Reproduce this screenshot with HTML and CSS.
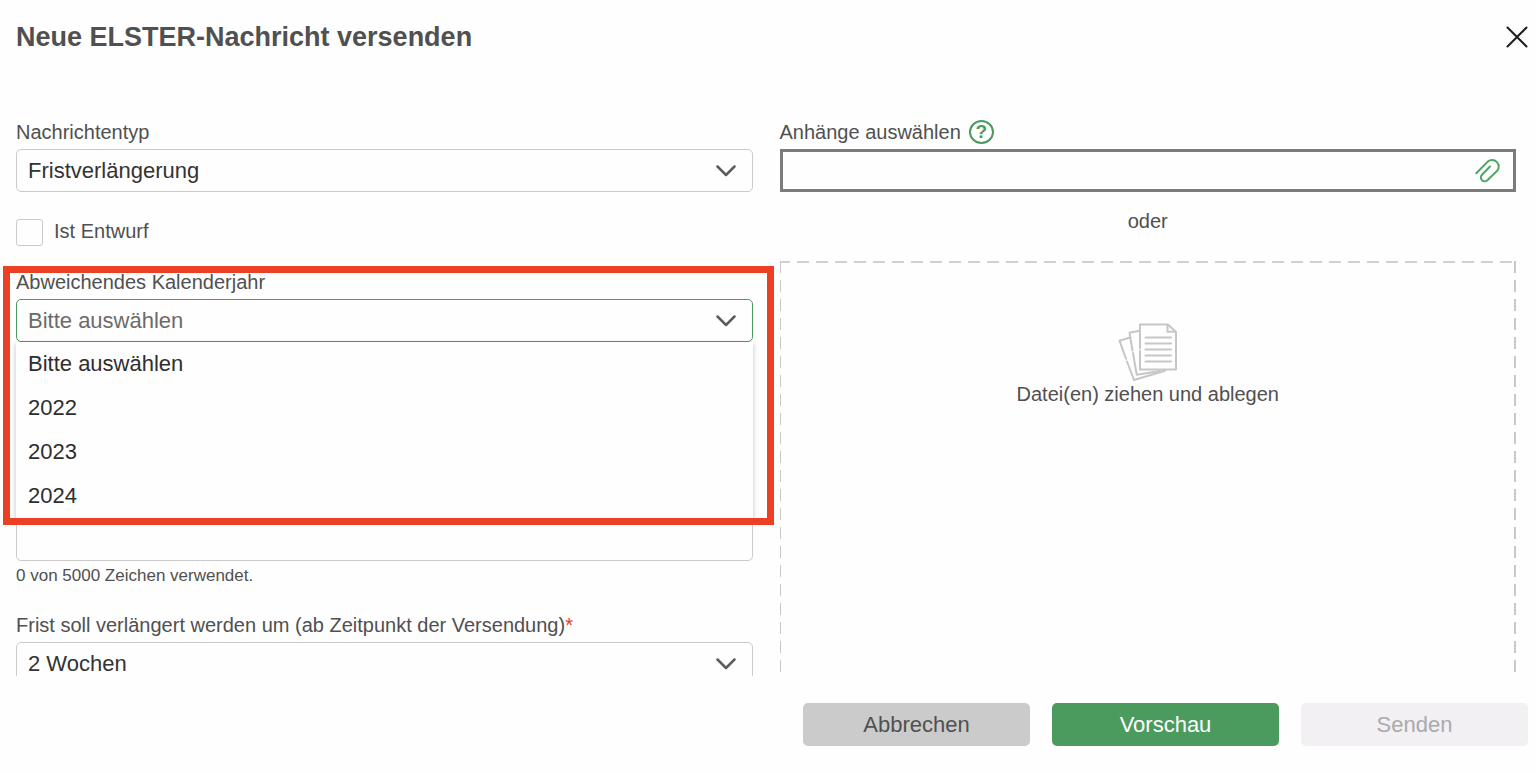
FILE: index.html
```
<!DOCTYPE html>
<html lang="de">
<head>
    <meta charset="UTF-8">
    <meta name="viewport" content="width=device-width, initial-scale=1.0">
    <title>Neue ELSTER-Nachricht versenden</title>
    <link rel="stylesheet" href="styles.css">
</head>
<body>

    <form class="dialog">
        <header class="dialog-header">
            <h1>Neue ELSTER-Nachricht versenden</h1>
            <button type="button" class="close" aria-label="Schließen">
                <svg width="22" height="22" viewBox="0 0 22 22"><path d="M1.5 1.5l19 19M20.5 1.5l-19 19"/></svg>
            </button>
        </header>

        <main class="dialog-body">
            <div class="columns">

                <div class="column">
                    <div class="field">
                        <label for="typ">Nachrichtentyp</label>
                        <div class="select">
                            <select id="typ">
                                <option>Fristverlängerung</option>
                            </select>
                            <svg class="chevron" width="20" height="12" viewBox="0 0 20 12"><path d="M1.5 1.5L10 10l8.5-8.5"/></svg>
                        </div>
                    </div>

                    <div class="check">
                        <input type="checkbox" id="entwurf">
                        <label for="entwurf">Ist Entwurf</label>
                    </div>

                    <div class="field marked">
                        <label for="jahr">Abweichendes Kalenderjahr</label>
                        <div class="select open">
                            <select id="jahr">
                                <option>Bitte auswählen</option>
                                <option>2022</option>
                                <option>2023</option>
                                <option>2024</option>
                            </select>
                            <svg class="chevron" width="20" height="12" viewBox="0 0 20 12"><path d="M1.5 1.5L10 10l8.5-8.5"/></svg>
                            <ul class="menu">
                                <li>Bitte auswählen</li>
                                <li>2022</li>
                                <li>2023</li>
                                <li>2024</li>
                            </ul>
                        </div>
                    </div>

                    <div class="message">
                        <textarea aria-label="Nachricht" maxlength="5000"></textarea>
                        <p class="counter">0 von 5000 Zeichen verwendet.</p>
                    </div>

                    <div class="field">
                        <label for="frist">Frist soll verlängert werden um (ab Zeitpunkt der Versendung)<span class="required">*</span></label>
                        <div class="select">
                            <select id="frist">
                                <option>2 Wochen</option>
                            </select>
                            <svg class="chevron" width="20" height="12" viewBox="0 0 20 12"><path d="M1.5 1.5L10 10l8.5-8.5"/></svg>
                        </div>
                    </div>
                </div>

                <div class="column">
                    <div class="field">
                        <div class="label-row">
                            <label for="anhang">Anhänge auswählen</label>
                            <button type="button" class="help">?</button>
                        </div>
                        <div class="upload">
                            <input type="text" id="anhang" readonly>
                            <button type="button" class="clip" aria-label="Datei auswählen">
                                <svg width="26" height="26" viewBox="0 0 26 26"><path d="M1.3 15.3L12.8 3.6a6.6 6.6 0 0 1 9.4 9.2L12.4 22.2a3.8 3.8 0 0 1-5.4-5.4L15 8.5"/></svg>
                            </button>
                        </div>
                    </div>

                    <p class="or">oder</p>

                    <div class="dropzone">
                        <svg width="60" height="58" viewBox="0 0 60 58">
                            <path d="M11.3 14.7L1.5 17.7L8 35.7M9 38.5L16 57L47 47.7"/>
                            <path d="M21.3 7.8L11.5 9.7L14.5 27.5M15 30L18.7 51.7L42 48"/>
                            <path d="M22 25.5V1.5H50L58 9V46.5H22V28M49.5 1.5V8.7H58"/>
                            <path d="M27.5 14.5H53M27.5 20.5H53M27.5 26.5H53M27.5 32.5H53M27.5 38.5H53"/>
                        </svg>
                        <p>Datei(en) ziehen und ablegen</p>
                    </div>
                </div>

            </div>
        </main>

        <footer class="dialog-footer">
            <button type="button" class="btn btn-cancel">Abbrechen</button>
            <button type="button" class="btn btn-preview">Vorschau</button>
            <button type="submit" class="btn btn-send" disabled>Senden</button>
        </footer>
    </form>

</body>
</html>
```
FILE: styles.css
```
* {
    box-sizing: border-box;
}

body {
    margin: 0;
    font-family: "Liberation Sans", Arial, sans-serif;
    font-size: 20px;
    line-height: 24px;
    color: #505050;
    background-color: #fefefe;
}

button,
input,
select,
textarea {
    font: inherit;
    color: inherit;
}

button {
    padding: 0;
    border: none;
    background: none;
    cursor: pointer;
}

p {
    margin: 0;
}

svg {
    display: block;
    fill: none;
    stroke-linecap: round;
    stroke-linejoin: round;
}

.dialog {
    display: flex;
    flex-direction: column;
    height: 100vh;
}

/* Header */
.dialog-header {
    display: flex;
    align-items: center;
    justify-content: space-between;
    padding: 20px 8px 20px 16px;
}

.dialog-header h1 {
    margin: 0;
    font-size: 27px;
    line-height: 34px;
}

.close svg {
    stroke: #1c1c1c;
    stroke-width: 2;
}

/* Body */
.dialog-body {
    flex: 1;
    min-height: 0;
    overflow: hidden;
}

.columns {
    display: grid;
    grid-template-columns: 1fr 1fr;
    gap: 27px;
    padding: 46px 20px 27px 16px;
}

.column {
    display: flex;
    flex-direction: column;
}

.field {
    display: flex;
    flex-direction: column;
    gap: 5px;
}

.required {
    color: #e8392b;
}

.select {
    position: relative;
}

.select select {
    display: block;
    width: 100%;
    height: 43px;
    padding: 0 48px 0 11px;
    font-size: 22px;
    color: #333333;
    background-color: #fefefe;
    border: 1px solid #cbcbcb;
    border-radius: 5px;
    appearance: none;
}

.chevron {
    position: absolute;
    top: 16px;
    right: 17px;
    stroke: #5c5c5c;
    stroke-width: 2.5;
    pointer-events: none;
}

.select.open select {
    color: #6b6b6b;
    border-color: #4b9b5e;
}

.menu {
    position: absolute;
    top: 100%;
    left: 0;
    right: 0;
    z-index: 1;
    margin: 0;
    padding: 0;
    list-style: none;
    font-size: 22px;
    line-height: 44px;
    color: #2e2e2e;
    background-color: #fefefe;
    box-shadow: 0 2px 5px rgba(0, 0, 0, 0.25);
}

.menu li {
    padding: 0 12px;
}

/* Red frame round the open drop-down */
.marked {
    position: relative;
}

.marked::after {
    content: "";
    position: absolute;
    z-index: 2;
    top: -4px;
    right: -21px;
    bottom: -183px;
    left: -13px;
    border: 7px solid #ec4025;
    pointer-events: none;
}

.check {
    display: flex;
    align-items: flex-start;
    gap: 11px;
    margin: 27px 0 24px;
}

.check input {
    width: 27px;
    height: 27px;
    margin: 0;
    border: 1px solid #cbcbcb;
    border-radius: 3px;
    background-color: #fefefe;
    appearance: none;
}

.message {
    margin: 48px 0 27px;
}

.message textarea {
    display: block;
    width: 100%;
    height: 171px;
    padding: 10px 11px;
    background-color: #fefefe;
    border: 1px solid #cbcbcb;
    border-radius: 5px;
    resize: none;
}

.counter {
    margin-top: 5px;
    font-size: 17px;
    line-height: 20px;
}

.label-row {
    display: flex;
    align-items: center;
    gap: 8px;
}

.help {
    width: 25px;
    height: 24px;
    font-size: 19px;
    font-weight: bold;
    line-height: 20px;
    color: #4b9b5e;
    border: 2px solid #4b9b5e;
    border-radius: 50%;
}

.upload {
    display: flex;
    align-items: center;
    height: 43px;
    padding-right: 12px;
    border: 3px solid #7b7b7b;
}

.upload input {
    flex: 1;
    min-width: 0;
    padding: 0 10px;
    border: none;
    background: none;
    outline: none;
}

.clip svg {
    stroke: #4fa565;
    stroke-width: 2;
}

.or {
    margin: 17px 0 28px;
    text-align: center;
}

/* Long dashes, drawn as repeating backgrounds */
.dropzone {
    flex: 1;
    display: flex;
    flex-direction: column;
    align-items: center;
    gap: 1px;
    padding-top: 62px;
    background-image:
        linear-gradient(to right, #d0d0d0 12px, transparent 12px),
        linear-gradient(to bottom, #c8c8c8 12px, transparent 12px),
        linear-gradient(to bottom, #c8c8c8 12px, transparent 12px);
    background-size: 19px 2px, 1px 19px, 2px 19px;
    background-position: -2px 0, 0 0, 100% 0;
    background-repeat: repeat-x, repeat-y, repeat-y;
}

.dropzone svg {
    stroke: #c6c6c6;
    stroke-width: 2;
}

/* Footer */
.dialog-footer {
    display: flex;
    justify-content: flex-end;
    gap: 22px;
    padding: 27px 8px;
}

.btn {
    width: 227px;
    height: 43px;
    font-size: 22px;
    border-radius: 5px;
}

.btn-cancel {
    color: #505050;
    background-color: #cbcbcb;
}

.btn-preview {
    color: #ffffff;
    background-color: #4b9b5e;
}

.btn-send {
    color: #aaaaaa;
    background-color: #f2f0f3;
    cursor: default;
}
```
